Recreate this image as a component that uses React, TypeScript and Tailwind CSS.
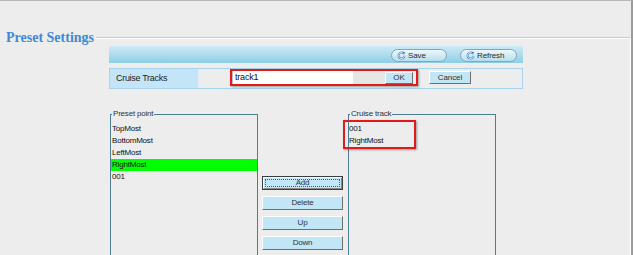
import React from 'react';

const sans = { fontFamily: '"Liberation Sans", Arial, sans-serif' };

function RefreshIcon() {
  return (
    <svg width="9" height="9" viewBox="0 0 10 10" className="shrink-0">
      <path d="M8.3 5.2a3.3 3.3 0 1 1-1.2-2.7" fill="none" stroke="#3b87c6" strokeWidth="2.2" />
      <path d="M8.3 5.2a3.3 3.3 0 1 1-1.2-2.7" fill="none" stroke="#ffffff" strokeWidth="0.9" />
      <path d="M6.2 0.6 L9.2 1.4 L7.4 4.2 Z" fill="#3b87c6" />
    </svg>
  );
}

function PillButton({ label, width }: { label: string; width: string }) {
  return (
    <div
      className={`${width} h-[13px] rounded-full border border-[#7fa6bf] bg-gradient-to-b from-[#eef8fc] to-[#b9ddec] flex items-center pl-[5px] gap-[2px] text-[8px] leading-none text-[#2a2a2a]`}
    >
      <RefreshIcon />
      <span className="tracking-[-0.1px]">{label}</span>
    </div>
  );
}

function WinButton({ label, focused }: { label: string; focused?: boolean }) {
  if (focused) {
    return (
      <div className="w-[81px] h-[14px] border border-[#3c3c3c] bg-[#c1e6f5]">
        <div className="h-full border border-t-white border-l-white border-b-[#8a8a8a] border-r-[#8a8a8a] p-[1px]">
          <div className="h-full border border-dotted border-[#555] flex items-center justify-center text-[8px] leading-none text-[#333] tracking-[-0.2px]">
            {label}
          </div>
        </div>
      </div>
    );
  }
  return (
    <div className="w-[81px] h-[14px] bg-[#c1e6f5] border border-t-white border-l-white border-b-[#6f6f6f] border-r-[#6f6f6f] flex items-center justify-center text-[8px] leading-none text-[#333] tracking-[-0.2px]">
      {label}
    </div>
  );
}

export default function App() {
  const presets = ['TopMost', 'BottomMost', 'LeftMost', 'RightMost', '001'];
  const cruise = ['001', 'RightMost'];

  return (
    <div
      className="w-[633px] h-[255px] overflow-hidden bg-[#ededed] border-t border-[#b7b7b7] border-r-2 border-r-[#9b9b9b] flex flex-col"
      style={sans}
    >
      {/* Title */}
      <div className="flex pl-[6px] pt-[29px] gap-[2px]">
        <div
          className="text-[14px] leading-[16px] font-bold text-[#3f89d6]"
          style={{ fontFamily: '"Liberation Serif", "Times New Roman", serif' }}
        >
          Preset Settings
        </div>
        <div className="flex-1 mt-[7px] h-[9px] border-t border-[#cdcdcd] border-r border-r-white">
          <div className="h-px bg-white mr-[-1px]" />
        </div>
      </div>

      <div className="flex-1 border-r border-white pl-[109px]">
        {/* Blue bar */}
        <div className="w-[414px] h-[17px] bg-gradient-to-b from-[#cdeaf5] to-[#8ccfe6] flex justify-end items-start pt-[3px] pr-[6px] gap-[13px]">
          <PillButton label="Save" width="w-[56px]" />
          <PillButton label="Refresh" width="w-[57px]" />
        </div>

        {/* Cruise tracks row */}
        <div className="w-[414px] h-[21px] mt-[5px] border border-[#a7d4ec] flex">
          <div className="w-[89px] bg-[#c4e5f7] border-r border-[#e2eef5] flex items-center pl-[6px] text-[9px] tracking-[-0.3px] text-[#222]">
            Cruise Tracks
          </div>
          <div className="flex-1 flex items-start pl-[31px]">
            <div className="w-[188px] h-[17px] border-2 border-[#e21a1a] shadow-[1px_1px_2px_rgba(0,0,0,0.35)] flex items-center pl-0 pr-[3px]">
              <div className="w-[121px] h-full bg-white border-l border-[#bdbdbd] flex items-center pl-[2px] text-[9px] tracking-[-0.2px] text-[#111]">
                track1
              </div>
              <div className="flex-1 h-full bg-[#e6e6e6]" />
              <div className="w-[28px] h-[12px] bg-[#c1e6f5] border border-t-white border-l-white border-b-[#6f6f6f] border-r-[#6f6f6f] flex items-center justify-center text-[8px] leading-none text-[#333]">
                OK
              </div>
            </div>
            <div className="ml-[11px] mt-[2px] w-[42px] h-[13px] bg-[#c1e6f5] border border-t-white border-l-white border-b-[#6f6f6f] border-r-[#6f6f6f] flex items-center justify-center text-[8px] leading-none text-[#333] tracking-[-0.1px]">
              Cancel
            </div>
          </div>
        </div>

        {/* Lists */}
        <div className="flex items-start mt-[19px] ml-[1px]">
          <fieldset className="w-[148px] h-[160px] border border-[#4b7f8f]">
            <legend className="ml-[1px] px-[1px] text-[8px] leading-[12px] tracking-[-0.2px] text-[#333]">
              Preset point
            </legend>
            <div className="pt-[3px]">
              {presets.map((p) => (
                <div
                  key={p}
                  className={`h-[12px] leading-[12px] pl-[1px] text-[8px] tracking-[-0.2px] text-[#111] ${
                    p === 'RightMost' ? 'bg-[#00ff00]' : ''
                  }`}
                >
                  {p}
                </div>
              ))}
            </div>
          </fieldset>

          <div className="ml-[4px] mt-[68px] flex flex-col gap-[6px]">
            <WinButton label="Add" focused />
            <WinButton label="Delete" />
            <WinButton label="Up" />
            <WinButton label="Down" />
          </div>

          <fieldset className="ml-[5px] w-[148px] h-[160px] border border-[#4b7f8f]">
            <legend className="ml-[1px] px-[1px] text-[8px] leading-[12px] tracking-[-0.2px] text-[#333]">
              Cruise track
            </legend>
            <div className="pt-[3px] relative">
              {cruise.map((c) => (
                <div key={c} className="h-[12px] leading-[12px] text-[8px] tracking-[-0.2px] text-[#111]">
                  {c}
                </div>
              ))}
              <div className="absolute left-[-6px] top-0 w-[73px] h-[29px] border-2 border-[#e21a1a] shadow-[1px_1px_2px_rgba(0,0,0,0.35)]" />
            </div>
          </fieldset>
        </div>
      </div>
    </div>
  );
}
